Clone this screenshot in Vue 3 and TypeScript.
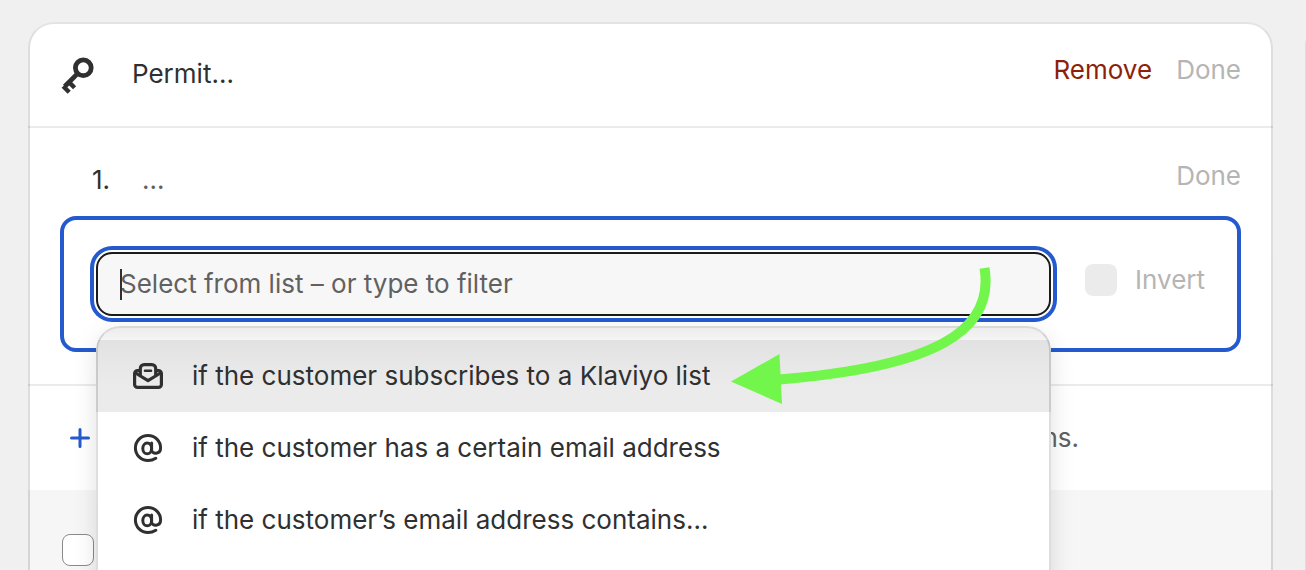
<script setup lang="ts">
import { ref } from 'vue'

interface Condition {
  id: string
  icon: 'mail' | 'at'
  label: string
}

const conditions: Condition[] = [
  { id: 'klaviyo', icon: 'mail', label: 'if the customer subscribes to a Klaviyo list' },
  { id: 'email', icon: 'at', label: 'if the customer has a certain email address' },
  { id: 'email-contains', icon: 'at', label: 'if the customer’s email address contains…' },
]

const activeId = ref('klaviyo')
const query = ref('')
</script>

<template>
  <div class="page">
    <main class="card">
      <header class="card-header">
        <h1 class="title">
          <svg class="key-icon" viewBox="0 0 36 40" fill="none" stroke="currentColor" aria-hidden="true">
            <circle cx="23.3" cy="11.8" r="7.9" stroke-width="4.8" />
            <path d="M17.8 17.4 4.7 30.5" stroke-width="4.8" />
            <path d="M3.2 30.3 9.2 36.3M9 26.1 14.6 31.7" stroke-width="4.4" />
          </svg>
          Permit…
        </h1>
        <div class="actions">
          <button type="button" class="link danger">Remove</button>
          <button type="button" class="link" disabled>Done</button>
        </div>
      </header>

      <section class="rule">
        <div class="rule-head">
          <div class="rule-name">
            <span class="number">1.</span>
            <span class="subdued">…</span>
          </div>
          <button type="button" class="link" disabled>Done</button>
        </div>

        <div class="editor">
          <div class="combobox">
            <input
              v-model="query"
              class="field"
              type="text"
              role="combobox"
              aria-label="Condition"
              aria-expanded="true"
              aria-controls="condition-list"
              placeholder="Select from list – or type to filter"
            />
            <span class="caret"></span>
            <ul id="condition-list" class="menu" role="listbox" aria-label="Conditions">
              <li v-for="item in conditions" :key="item.id" role="presentation">
                <button
                  type="button"
                  role="option"
                  class="option"
                  :class="{ active: item.id === activeId }"
                  :aria-selected="item.id === activeId"
                  @mouseenter="activeId = item.id"
                >
                  <svg
                    class="option-icon"
                    viewBox="0 0 32 32"
                    fill="none"
                    stroke="currentColor"
                    stroke-linecap="round"
                    stroke-linejoin="round"
                    aria-hidden="true"
                  >
                    <g v-if="item.icon === 'mail'" stroke-width="3.2">
                      <path d="M7.5 10.6H5.6a3 3 0 0 0-3 3v10.8a3 3 0 0 0 3 3h20.8a3 3 0 0 0 3-3V13.6a3 3 0 0 0-3-3h-1.9" />
                      <path d="M8.3 15V8.4a3.8 3.8 0 0 1 3.8-3.8h7.8a3.8 3.8 0 0 1 3.8 3.8V15" />
                      <path d="M3.5 13 16 20.6 28.5 13" />
                      <path d="M13 10.8h6" stroke-width="2.6" />
                    </g>
                    <g v-else stroke-width="3">
                      <ellipse cx="15.2" cy="16.4" rx="4.4" ry="5.4" />
                      <path d="M19.6 11V18c0 4.6 9 4.6 9-2A12.6 12.6 0 1 0 16 28.6c3 0 5.6-.9 7.8-2.3" />
                    </g>
                  </svg>
                  {{ item.label }}
                </button>
              </li>
            </ul>
            <svg class="arrow" viewBox="730 264 264 144" aria-hidden="true">
              <path d="M984.5 268C995 331 935 367 779 379.5" fill="none" stroke="#73f64b" stroke-width="10" />
              <path d="M731 381.5 779.5 354 782 404Z" fill="#73f64b" />
            </svg>
          </div>
          <label class="invert">
            <input type="checkbox" class="check muted" disabled />
            Invert
          </label>
        </div>
      </section>

      <section class="add-row">
        <button type="button" class="add" aria-label="Add">
          <svg class="plus" viewBox="0 0 24 24" aria-hidden="true">
            <path d="M12 3.5V20.5M3.5 12H20.5" stroke="currentColor" stroke-width="3" stroke-linecap="round" />
          </svg>
        </button>
        <span class="subdued">conditions.</span>
      </section>

      <footer class="card-footer">
        <input type="checkbox" class="check" aria-label="Enable" />
      </footer>
    </main>

    <aside class="side">
      <div class="side-card"></div>
    </aside>
  </div>
</template>

<style>
body {
  margin: 0;
  background: #f0f0f0;
}
</style>

<style scoped>
.page {
  box-sizing: border-box;
  display: flex;
  gap: 32px;
  height: 100vh;
  padding: 22px 0 0 28px;
  overflow: hidden;
  background: #f0f0f0;
  color: #303030;
  font-family: Inter, "Liberation Sans", sans-serif;
  font-size: 26px;
  font-weight: 400;
  line-height: 40px;
}

.card {
  position: relative;
  display: flex;
  flex: 1;
  flex-direction: column;
  min-width: 0;
  border-radius: 26px 26px 0 0;
  background: #fff;
}

.card::after {
  content: "";
  position: absolute;
  inset: 0;
  border: 2px solid rgba(0, 0, 0, 0.13);
  border-top-color: rgba(0, 0, 0, 0.11);
  border-bottom: 0;
  border-radius: inherit;
  pointer-events: none;
}

.card-header {
  display: flex;
  justify-content: space-between;
  align-items: flex-start;
  padding: 28px 32px 24px;
  border-bottom: 2px solid #ebebeb;
}

.title {
  display: flex;
  gap: 36px;
  margin: 0;
  font-size: inherit;
  font-weight: inherit;
  line-height: 48px;
}

.key-icon {
  width: 36px;
  height: 40px;
  padding-top: 6px;
  padding-bottom: 6px;
}

.actions {
  display: flex;
  gap: 24px;
}

button {
  padding: 0;
  border: 0;
  background: none;
  color: inherit;
  font: inherit;
}

.link:disabled {
  color: #b5b5b5;
}

.link.danger {
  color: #8e1f0b;
}

.subdued {
  color: #616161;
}

.rule {
  padding: 28px 32px 32px;
  border-bottom: 2px solid #ebebeb;
}

.rule-head {
  display: flex;
  justify-content: space-between;
  align-items: flex-start;
  margin-bottom: 12px;
}

.rule-name {
  display: flex;
  padding-left: 32px;
  line-height: 48px;
}

.number {
  width: 50px;
}

.editor {
  display: flex;
  align-items: flex-start;
  gap: 34px;
  padding: 32px;
  border: 4px solid #255acf;
  border-radius: 16px;
}

.combobox {
  position: relative;
  flex: 1;
  min-width: 0;
}

.field {
  display: block;
  box-sizing: border-box;
  width: 100%;
  height: 64px;
  padding: 0 22px 2px;
  border: 2px solid #1a1a1a;
  border-radius: 16px;
  outline: none;
  background: #f7f7f7;
  box-shadow: 0 0 0 2px #fff, 0 0 0 6px #255acf;
  color: #303030;
  font: inherit;
}

.field::placeholder {
  color: #616161;
  opacity: 1;
}

.caret {
  position: absolute;
  top: 17px;
  left: 24px;
  width: 2px;
  height: 31px;
  background: #303030;
}

.menu {
  position: absolute;
  z-index: 1;
  top: 74px;
  left: 0;
  right: 0;
  min-height: 288px;
  margin: 0;
  padding: 14px 0;
  border-radius: 24px;
  background: #fff;
  box-shadow: 0 8px 24px rgba(0, 0, 0, 0.12);
  list-style: none;
  overflow: hidden;
}

.menu::before {
  content: "";
  position: absolute;
  inset: 0 0 auto;
  height: 64px;
  background: linear-gradient(rgba(0, 0, 0, 0.08), rgba(0, 0, 0, 0.04) 14px, rgba(0, 0, 0, 0.01) 44px, transparent);
  pointer-events: none;
}

.menu::after {
  content: "";
  position: absolute;
  inset: 0;
  border: 2px solid rgba(0, 0, 0, 0.13);
  border-top-color: rgba(0, 0, 0, 0.08);
  border-radius: inherit;
  pointer-events: none;
}

.option {
  display: flex;
  align-items: center;
  gap: 28px;
  width: 100%;
  height: 72px;
  padding: 0 36px;
  text-align: left;
}

.option.active {
  background: #ebebeb;
}

.option-icon {
  width: 32px;
  height: 32px;
}

.arrow {
  position: absolute;
  z-index: 2;
  top: 12px;
  right: 57px;
  width: 264px;
  height: 144px;
  pointer-events: none;
}

.invert {
  display: flex;
  align-items: center;
  gap: 18px;
  height: 56px;
  color: #b5b5b5;
}

.check {
  appearance: none;
  box-sizing: border-box;
  width: 32px;
  height: 32px;
  margin: 0;
  border: 1px solid #8a8a8a;
  border-radius: 8px;
  background: #fff;
}

.check.muted {
  border: 0;
  background: #ebebeb;
}

.add-row {
  display: flex;
  justify-content: space-between;
  align-items: center;
  padding: 32px 194px 32px 40px;
}

.add {
  display: flex;
  color: #255acf;
}

.plus {
  width: 24px;
  height: 24px;
}

.card-footer {
  flex: 1;
  padding: 44px 34px 0;
  background: #f6f6f6;
}

.side {
  width: 1px;
}

.side-card {
  box-sizing: border-box;
  width: 400px;
  height: 100%;
  border: 2px solid #dcdcdc;
  border-bottom: 0;
  border-radius: 24px 24px 0 0;
  background: #fff;
}
</style>
